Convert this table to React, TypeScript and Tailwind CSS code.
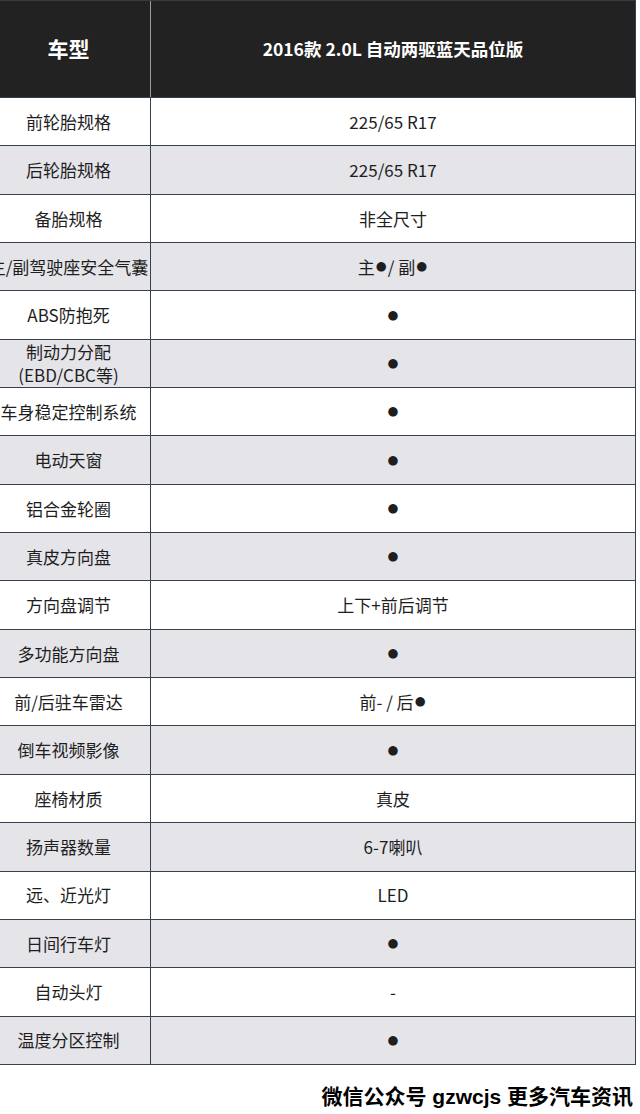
import React from "react"

type Row = { label: React.ReactNode; value: React.ReactNode }

const rows: Row[] = [
  { label: "前轮胎规格", value: "225/65 R17" },
  { label: "后轮胎规格", value: "225/65 R17" },
  { label: "备胎规格", value: "非全尺寸" },
  { label: "主/副驾驶座安全气囊", value: "主● / 副●" },
  { label: "ABS防抱死", value: "●" },
  {
    label: (
      <span className="leading-[23px]">
        制动力分配
        <br />
        (EBD/CBC等)
      </span>
    ),
    value: "●",
  },
  { label: "车身稳定控制系统", value: "●" },
  { label: "电动天窗", value: "●" },
  { label: "铝合金轮圈", value: "●" },
  { label: "真皮方向盘", value: "●" },
  { label: "方向盘调节", value: "上下+前后调节" },
  { label: "多功能方向盘", value: "●" },
  { label: "前/后驻车雷达", value: "前- / 后●" },
  { label: "倒车视频影像", value: "●" },
  { label: "座椅材质", value: "真皮" },
  { label: "扬声器数量", value: "6-7喇叭" },
  { label: "远、近光灯", value: "LED" },
  { label: "日间行车灯", value: "●" },
  { label: "自动头灯", value: "-" },
  { label: "温度分区控制", value: "●" },
]

// bullet glyph gets its own font so it comes out the right size
function Cell({ text }: { text: React.ReactNode }) {
  if (typeof text !== "string") return <>{text}</>
  const parts = text.split("●")
  return (
    <>
      {parts.map((p, i) => (
        <React.Fragment key={i}>
          {p}
          {i < parts.length - 1 && (
            <span className="font-['DejaVu_Sans',sans-serif] text-[12.5px] px-[1px]">●</span>
          )}
        </React.Fragment>
      ))}
    </>
  )
}

export default function App() {
  return (
    <div className="w-[640px] h-[1114px] overflow-hidden bg-white font-['Noto_Sans_CJK_SC','Noto_Sans',sans-serif] text-[#1e1e1e]">
      <div className="ml-[-13px] w-[649px] border-r border-[#34414f]">
        <div className="flex h-[97px] bg-[#222222] border-t border-[#3a3a3a] text-white font-bold">
          <div className="w-[164px] flex items-center justify-center text-[21px] border-r border-[#9a9a9a]">
            车型
          </div>
          <div className="flex-1 flex items-center justify-center text-[17.5px]">
            2016款 2.0L 自动两驱蓝天品位版
          </div>
        </div>
        {rows.map((r, i) => (
          <div
            key={i}
            className={`flex h-[48.35px] border-t border-[#34414f] text-[17px] ${
              i % 2 === 1 ? "bg-[#e4e4e9]" : "bg-white"
            }`}
          >
            <div className="w-[164px] flex items-center justify-center text-center whitespace-nowrap border-r border-[#34414f]">
              {r.label}
            </div>
            <div className="flex-1 flex items-center justify-center whitespace-nowrap">
              <Cell text={r.value} />
            </div>
          </div>
        ))}
        <div className="border-t border-[#34414f]" />
      </div>
      <div className="flex justify-end pr-[7px] pt-[20px] text-[21px] leading-[24px] font-bold text-black font-['Liberation_Sans','Noto_Sans_CJK_SC',sans-serif]">
        微信公众号 gzwcjs 更多汽车资讯
      </div>
    </div>
  )
}
